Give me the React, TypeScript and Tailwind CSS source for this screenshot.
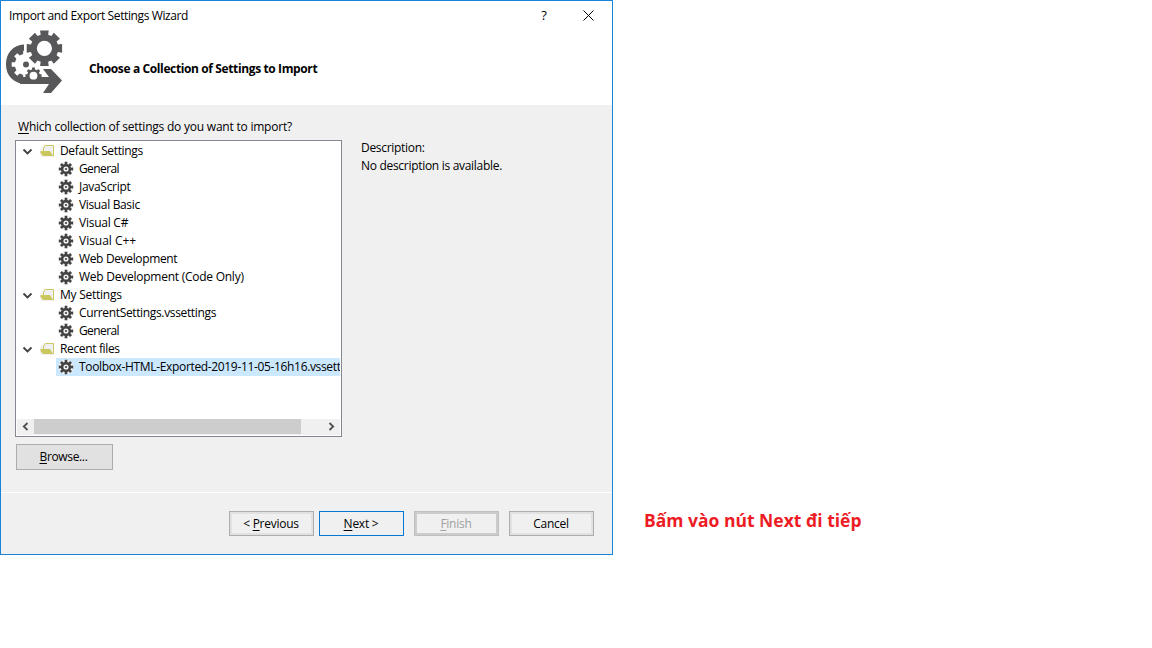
import type { ReactNode } from "react";

function gearPath(cx: number, cy: number, outer: number, inner: number, tip: number, root: number, teeth = 8) {
  const parts: string[] = [];
  for (let i = 0; i < teeth; i++) {
    const a = (i * 2 * Math.PI) / teeth - Math.PI / 2;
    const points: [number, number][] = [
      [inner, a - root],
      [outer, a - tip],
      [outer, a + tip],
      [inner, a + root],
    ];
    for (const [r, t] of points) {
      parts.push(`${(cx + r * Math.cos(t)).toFixed(2)} ${(cy + r * Math.sin(t)).toFixed(2)}`);
    }
  }
  return `M${parts.join("L")}Z`;
}

function circlePath(cx: number, cy: number, r: number) {
  return `M${cx - r} ${cy}a${r} ${r} 0 1 0 ${2 * r} 0a${r} ${r} 0 1 0 ${-2 * r} 0Z`;
}

function WizardIcon() {
  return (
    <svg className="block shrink-0" width="60" height="66" viewBox="4 29 60 66">
      <path fill="#58585a" d="M24 44.500C13 45 6 53 6 64.500C6 76 14 84 26 84H49L43 93H51L62 80.500L51 69H43L49 77H35V64L24 58Z" />
      <path fill="#fff" d={gearPath(25.5, 64.5, 14, 10.8, 0.16, 0.22)} />
      <path fill="#fff" d="M24 53H34V66L42 69V73L46 77.500H37L24 70Z" />
      <path fill="#58585a" d={circlePath(26, 64.6, 3)} />
      <path fill="#58585a" d="M20 84V77H49V84Z" />
      <path fill="#58585a" d={gearPath(33.5, 75.7, 8.2, 6.4, 0.17, 0.24)} />
      <circle cx="33.5" cy="75.7" r="3.9" fill="#fff" />
      <path fill="#58585a" fillRule="evenodd" d={gearPath(44.4, 48.3, 18.2, 14, 0.24, 0.27) + circlePath(44.4, 48.3, 7.6)} />
    </svg>
  );
}

function GearIcon() {
  return (
    <svg className="block shrink-0" width="16" height="16" viewBox="0 0 16 16">
      <path fill="#f2f2f2" d={circlePath(8, 8, 7.4)} />
      <path fill="#424242" fillRule="evenodd" d={gearPath(8, 8, 7.3, 5.2, 0.19, 0.24) + circlePath(8, 8, 2.6)} />
      <circle cx="8" cy="8" r="1.1" fill="#424242" />
    </svg>
  );
}

function FolderIcon() {
  return (
    <svg className="block shrink-0" width="16" height="16" viewBox="0 0 16 16">
      <path fill="#f2f1ee" d="M1 6L5 2H15V14H2L1 12Z" />
      <path fill="#f0eff1" stroke="#cbc75f" d="M4.500 8V5L6.500 2.500H14.500V12.500H12" />
      <path fill="#cbc75f" d="M1.500 8H11L14 13H4L1.500 10Z" />
    </svg>
  );
}

function Chevron() {
  return (
    <svg className="block shrink-0" width="11" height="16" viewBox="0 0 11 16">
      <path fill="none" stroke="#404040" strokeWidth="1.8" d="M1.500 6.500L5.500 10.500L9.500 6.500" />
    </svg>
  );
}

function Key({ children }: { children: ReactNode }) {
  return <span className="underline decoration-1 underline-offset-2">{children}</span>;
}

type Item = { label: string; spacing: string; selected?: boolean };
type Group = { label: string; spacing: string; items: Item[] };

const groups: Group[] = [
  {
    label: "Default Settings",
    spacing: "tracking-[-0.35px]",
    items: [
      { label: "General", spacing: "tracking-[-0.6px]" },
      { label: "JavaScript", spacing: "tracking-[-0.3px]" },
      { label: "Visual Basic", spacing: "tracking-[-0.35px]" },
      { label: "Visual C#", spacing: "tracking-[-0.25px]" },
      { label: "Visual C++", spacing: "tracking-[-0.02px]" },
      { label: "Web Development", spacing: "tracking-[-0.35px]" },
      { label: "Web Development (Code Only)", spacing: "tracking-[-0.25px]" },
    ],
  },
  {
    label: "My Settings",
    spacing: "tracking-[-0.25px]",
    items: [
      { label: "CurrentSettings.vssettings", spacing: "tracking-[-0.35px]" },
      { label: "General", spacing: "tracking-[-0.6px]" },
    ],
  },
  {
    label: "Recent files",
    spacing: "tracking-[-0.35px]",
    items: [
      { label: "Toolbox-HTML-Exported-2019-11-05-16h16.vssettings", spacing: "tracking-[-0.34px]", selected: true },
    ],
  },
];

function Tree() {
  return (
    <div className="mt-[4px] flex h-[297px] w-[327px] flex-col border border-[#828790] bg-white px-px pt-px pb-px">
      <div className="flex-1 overflow-hidden">
        {groups.map((group) => (
          <div key={group.label}>
            <div className="flex h-[18px] items-center pl-[5px]">
              <Chevron />
              <div className="ml-[6px]"><FolderIcon /></div>
              <span className={`ml-[5px] whitespace-nowrap ${group.spacing}`}>{group.label}</span>
            </div>
            {group.items.map((item) => (
              <div
                key={item.label}
                className={`ml-[39px] flex h-[18px] items-center pl-[2px] ${item.selected ? "bg-[#cce8ff]" : ""}`}
              >
                <GearIcon />
                <span className={`ml-[5px] whitespace-nowrap ${item.spacing}`}>{item.label}</span>
              </div>
            ))}
          </div>
        ))}
      </div>
      <div className="flex h-4 items-stretch bg-[#f0f0f0]">
        <div className="flex w-[17px] items-center justify-center pb-px">
          <svg width="7" height="9" viewBox="0 0 7 9"><path fill="none" stroke="#505050" strokeWidth="1.8" d="M5.500 1L1.800 4.500L5.500 8" /></svg>
        </div>
        <div className="mb-px w-[267px] bg-[#cdcdcd]" />
        <div className="flex-1" />
        <div className="flex w-[17px] items-center justify-center pb-px">
          <svg width="7" height="9" viewBox="0 0 7 9"><path fill="none" stroke="#505050" strokeWidth="1.8" d="M1.500 1L5.200 4.500L1.500 8" /></svg>
        </div>
      </div>
    </div>
  );
}

const buttonBase = "flex h-[25px] w-[85px] items-center justify-center border pt-px pr-px whitespace-nowrap tracking-[-0.25px]";

export default function App() {
  return (
    <div className="flex h-[648px] w-[1152px] items-start overflow-hidden bg-white font-['Open_Sans','Noto_Sans',sans-serif] text-[12px] leading-[18px] text-black">
      <div className="flex h-[555px] w-[613px] flex-col border border-[#1883d7] bg-[#f0f0f0]">
        <header className="h-[104px] bg-white">
          <div className="flex h-7 items-center pl-2">
            <span className="pt-[2px] tracking-[-0.39px]">Import and Export Settings Wizard</span>
            <span className="ml-auto w-2 text-center text-[13px]">?</span>
            <svg className="mr-[18px] ml-[35px] block" width="11" height="11" viewBox="0 0 11 11">
              <path fill="none" stroke="#000" d="M.5 .5L10.500 10.500M10.500 .5L.5 10.500" />
            </svg>
          </div>
          <div className="flex pl-[3px]">
            <WizardIcon />
            <h1 className="mt-[31px] ml-[25px] text-[12px] font-bold tracking-[-0.38px]">Choose a Collection of Settings to Import</h1>
          </div>
        </header>
        <main className="flex h-[387px] pl-[14px]">
          <div className="w-[327px]">
            <p className="mt-[13px] pl-[3px] tracking-[-0.22px]"><Key>W</Key>hich collection of settings do you want to import?</p>
            <Tree />
            <button className="mt-[7px] ml-px flex h-[26px] w-[97px] items-center justify-center border border-[#adadad] bg-[#e1e1e1] pr-[2px]">
              <span className="tracking-[-0.35px]"><Key>B</Key>rowse...</span>
            </button>
          </div>
          <div className="mt-[34px] ml-[19px] tracking-[-0.3px]">
            <p>Description:</p>
            <p>No description is available.</p>
          </div>
        </main>
        <footer className="flex justify-end border-t border-white pt-[18px] pr-[18px]">
          <button className={`${buttonBase} border-[#adadad] shadow-[inset_0_0_0_2px_#e1e1e1]`}><span>&lt; <Key>P</Key>revious</span></button>
          <button className={`${buttonBase} ml-[5px] border-[#0078d7]`}><span><Key>N</Key>ext &gt;</span></button>
          <button className={`${buttonBase} ml-[10px] border-[#bfbfbf] text-[#a0a0a0] shadow-[inset_0_0_0_2px_#cccccc]`}><span><Key>F</Key>inish</span></button>
          <button className={`${buttonBase} ml-[10px] border-[#adadad] shadow-[inset_0_0_0_2px_#e1e1e1]`}><span>Cancel</span></button>
        </footer>
      </div>
      <p className="mt-[508px] ml-[31px] text-[17.5px] leading-6 font-bold whitespace-nowrap text-[#ed1c24]">Bấm vào nút Next đi tiếp</p>
    </div>
  );
}
